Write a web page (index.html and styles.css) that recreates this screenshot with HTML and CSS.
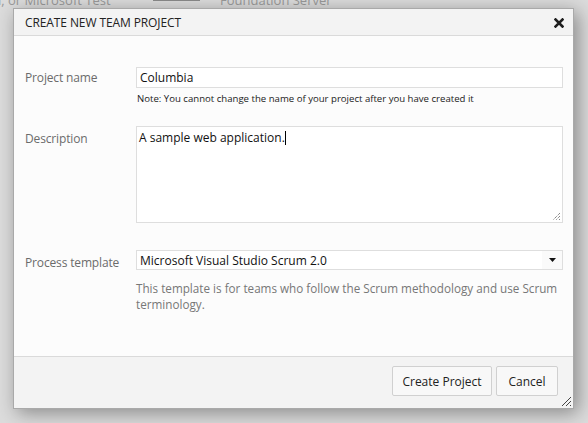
FILE: index.html
```html
<!DOCTYPE html>
<html>
<head>
<meta charset="utf-8">
<link rel="stylesheet" href="styles.css">
</head>
<body>
<div class="page-bg">
  <span class="bg-text bg-left">l, or Microsoft Test</span>
  <span class="bg-tab"></span>
  <span class="bg-text bg-mid">Foundation Server</span>
</div>
<div class="dialog">
  <div class="dialog-header">
    <span class="dialog-title">CREATE NEW TEAM PROJECT</span>
    <svg class="close-icon" width="10" height="10" viewBox="0 0 10 10"><path d="M1.5 1.5 L8.5 8.5 M8.5 1.5 L1.5 8.5" stroke="#1e1e1e" stroke-width="2.6" stroke-linecap="square"/></svg>
  </div>
  <div class="dialog-body">
    <div class="form-row row-name">
      <div class="label label-name">Project name</div>
      <div class="field">
        <div class="input">Columbia</div>
        <div class="note">Note: You cannot change the name of your project after you have created it</div>
      </div>
    </div>
    <div class="form-row row-desc">
      <div class="label label-desc">Description</div>
      <div class="field">
        <div class="textarea">A sample web application.<span class="caret"></span>
          <svg class="grip" width="10" height="10" viewBox="0 0 10 10"><path d="M9 2 L2 9 M9 5 L5 9 M9 8 L8 9" stroke="#555" stroke-width="1" stroke-dasharray="1 1"/></svg>
        </div>
      </div>
    </div>
    <div class="form-row row-tpl">
      <div class="label label-tpl">Process template</div>
      <div class="field">
        <div class="select"><span class="select-text">Microsoft Visual Studio Scrum 2.0</span><span class="select-arrow"><svg width="7" height="4" viewBox="0 0 7 4"><path d="M0 0 H7 L3.5 4 Z" fill="#111"/></svg></span></div>
        <div class="help">This template is for teams who follow the Scrum methodology and use Scrum terminology.</div>
      </div>
    </div>
  </div>
  <div class="dialog-footer">
    <button class="btn btn-create">Create Project</button>
    <button class="btn btn-cancel">Cancel</button>
    <svg class="footer-grip" width="12" height="12" viewBox="0 0 12 12"><path d="M11 2 L2 11 M11 6 L6 11 M11 10 L10 11" stroke="#444" stroke-width="1"/></svg>
  </div>
</div>
</body>
</html>
```
FILE: styles.css
```css
html, body {
  margin: 0;
  padding: 0;
}
body {
  width: 588px;
  height: 423px;
  background: #dcdcdc;
  font-family: "Open Sans", "Noto Sans", sans-serif;
  overflow: hidden;
  position: relative;
}
.page-bg {
  position: relative;
  height: 8px;
}
.bg-text {
  position: absolute;
  top: -9px;
  font-size: 13px;
  color: #9a9a9a;
  white-space: nowrap;
}
.bg-left { left: -2px; }
.bg-mid { left: 220px; }
.bg-tab {
  position: absolute;
  left: 153px;
  top: 0;
  width: 47px;
  height: 1px;
  background: #8a8a8a;
}
.dialog {
  position: absolute;
  left: 13px;
  top: 8px;
  width: 559px;
  height: 399px;
  border: 1px solid #a9a9a9;
  background: #fcfcfc;
  box-shadow: 4px 4px 18px rgba(0, 0, 0, 0.38);
  display: flex;
  flex-direction: column;
}
.dialog-header {
  height: 26px;
  background: #f3f3f3;
  border-bottom: 1px solid #dadada;
  display: flex;
  align-items: center;
  justify-content: space-between;
  padding: 0 9px 0 11px;
}
.dialog-title {
  font-size: 12px;
  color: #222;
  letter-spacing: -0.1px;
  padding-top: 1px;
}
.close-icon {
  display: block;
  margin-top: 1px;
}
.dialog-body {
  flex: 1;
  padding: 31px 10px 0 11px;
}
.form-row {
  display: grid;
  grid-template-columns: 111px 1fr;
}
.row-desc { margin-top: 20px; }
.row-tpl { margin-top: 27px; }
.label {
  font-size: 12px;
  color: #6b6b6b;
  line-height: 16px;
  letter-spacing: -0.15px;
}
.label-name { padding-top: 3px; }
.label-desc { padding-top: 5px; }
.label-tpl { padding-top: 5px; }
.input {
  height: 19px;
  border: 1px solid #dedede;
  background: #fff;
  font-size: 12px;
  line-height: 19px;
  color: #111;
  padding-left: 3px;
}
.note {
  font-size: 9.6px;
  color: #222;
  margin-top: 4px;
  line-height: 14px;
  padding-left: 1px;
}
.textarea {
  position: relative;
  border: 1px solid #dedede;
  background: #fff;
  font-size: 12px;
  color: #111;
  padding: 2px 0 0 2px;
  line-height: 17px;
  box-sizing: border-box;
  height: 97px;
}
.caret {
  display: inline-block;
  width: 1px;
  height: 14px;
  background: #000;
  vertical-align: -3px;
}
.grip {
  position: absolute;
  right: 1px;
  bottom: 1px;
}
.select {
  height: 18px;
  border: 1px solid #dedede;
  background: #fff;
  display: flex;
  align-items: center;
  justify-content: space-between;
}
.select-text {
  font-size: 12px;
  color: #111;
  padding-left: 3px;
}
.select-arrow {
  width: 20px;
  height: 18px;
  background: #fafafa;
  display: flex;
  align-items: center;
  justify-content: center;
}
.select-arrow svg { display: block; }
.help {
  font-size: 11.7px;
  color: #777;
  line-height: 16px;
  margin-top: 10px;
  margin-right: -4px;
}
.dialog-footer {
  position: relative;
  background: #f3f3f3;
  border-top: 1px solid #dadada;
  display: flex;
  justify-content: flex-end;
  align-items: flex-start;
  gap: 4px;
  padding: 9px 15px 0 0;
  box-sizing: border-box;
  height: 52px;
}
.btn {
  height: 30px;
  border: 1px solid #d0d0d0;
  border-radius: 2px;
  background: #f8f8f8;
  font-family: "Open Sans", "Noto Sans", sans-serif;
  font-size: 12px;
  color: #222;
  padding: 0;
  margin: 0;
}
.btn-create { width: 100px; }
.btn-cancel { width: 62px; }
.footer-grip {
  position: absolute;
  right: 1px;
  bottom: 1px;
}
```
